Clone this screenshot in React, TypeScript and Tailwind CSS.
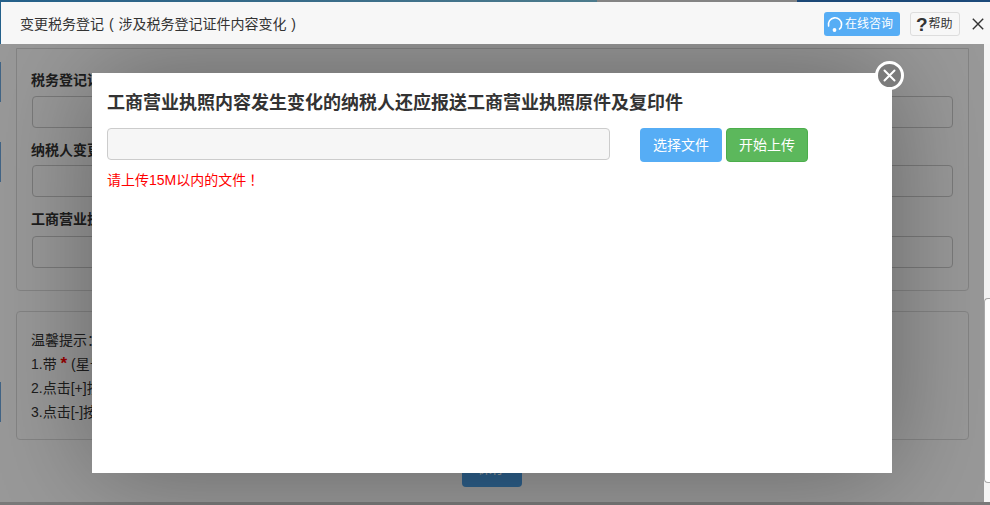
const font = { fontFamily: '"Liberation Sans", "Noto Sans CJK SC", sans-serif' };

const fields = [
  { label: '税务登记证', top: 'mt-[21px]', inputTop: 'mt-[6px]' },
  { label: '纳税人变更', top: 'mt-[12px]', inputTop: 'mt-[5px]' },
  { label: '工商营业执照', top: 'mt-[12px]', inputTop: 'mt-[7px]' },
];

function Headset() {
  return (
    <svg width="16" height="18" viewBox="0 0 16 18" fill="none" className="shrink-0">
      <path d="M1.6 11 A6.6 6.6 0 1 1 14.6 9.5 C14.6 11.5 14 13 12.5 14" stroke="white" strokeWidth="1.6" strokeLinecap="round" />
      <circle cx="7.5" cy="15" r="1.9" fill="white" />
    </svg>
  );
}

function PageBehind() {
  return (
    <div className="flex h-[458px] w-[983px] flex-col bg-white px-[15px]">
      <div className="mt-[4px] flex h-[243px] flex-col rounded-b border border-[#ddd] px-[15px] text-[14px] text-[#333]">
        {fields.map((f) => (
          <div key={f.label} className={f.top}>
            <div className="-ml-px h-[20px] leading-[20px] font-bold">{f.label}</div>
            <div className={`${f.inputTop} h-[32px] rounded border border-[#ccc] bg-white`} />
          </div>
        ))}
      </div>
      <div className="mt-[20px] h-[129px] rounded border border-[#ddd] px-[14px] pt-[16px] text-[14px] leading-[24px] text-[#333]">
        <p>温馨提示：</p>
        <p>
          1.带 <span className="text-[17px] leading-none font-bold text-[#f00]">*</span> (星号)的为必填项
        </p>
        <p>2.点击[+]按钮增加一行</p>
        <p>3.点击[-]按钮删除一行</p>
      </div>
      <div className="mt-[10px] flex justify-center pr-[2px]">
        <button className="h-[37px] w-[60px] rounded bg-[#4b9fe6] text-[14px] text-white">保存</button>
      </div>
    </div>
  );
}

function UploadModal() {
  return (
    <div className="absolute top-[73px] left-[92px] h-[400px] w-[800px] bg-white px-[15px] pt-[17px] shadow-[0_0_100px_rgba(0,0,0,0.34)]">
      <h2 className="h-[26px] text-[18px] leading-[26px] font-bold text-[#333]">
        工商营业执照内容发生变化的纳税人还应报送工商营业执照原件及复印件
      </h2>
      <div className="mt-[12px] flex items-start">
        <div className="h-[32px] w-[503px] rounded border border-[#ccc] bg-[#f6f6f6]" />
        <button className="ml-[30px] h-[34px] w-[82px] rounded bg-[#56adf5] text-[14px] text-white">选择文件</button>
        <button className="ml-[4px] h-[34px] w-[82px] rounded border border-[#4cae4c] bg-[#5cb85c] text-[14px] text-white">
          开始上传
        </button>
      </div>
      <p className="mt-[8px] text-[14px] leading-[20px] text-[#f00]">
        请上传15M以内的文件<span className="ml-[3px]">！</span>
      </p>
      <div className="absolute -top-[12px] -right-[12px] flex h-[29px] w-[29px] items-center justify-center rounded-full border-[3px] border-white bg-[#7b7b7b]">
        <svg width="13" height="13" viewBox="0 0 13 13" fill="none">
          <path d="M1.5 1.5 L11.5 11.5 M11.5 1.5 L1.5 11.5" stroke="white" strokeWidth="2" strokeLinecap="round" />
        </svg>
      </div>
    </div>
  );
}

export default function App() {
  return (
    <div className="relative flex h-[505px] w-[990px] flex-col overflow-hidden bg-white" style={font}>
      <div className="flex h-[2px] shrink-0">
        <div className="w-[597px] bg-gradient-to-r from-[#24608a] to-[#4f7f90]" />
        <div className="w-[200px] bg-[#888]" />
        <div className="flex-1 bg-[#1c4a7a]" />
      </div>
      <div className="relative z-20 flex h-[42px] shrink-0 items-center border-l border-[#24608a] bg-[#f7f7f7] pt-[2px] pl-[19px]">
        <span className="text-[14px] text-[#333] [word-spacing:1px]">变更税务登记 ( 涉及税务登记证件内容变化 )</span>
        <div className="ml-auto flex items-center">
          <button className="flex h-[24px] w-[76px] items-center gap-[2px] rounded-[3px] bg-[#56adf5] pl-[3px] text-[12px] text-white">
            <Headset />
            <span>在线咨询</span>
          </button>
          <button className="ml-[10px] flex h-[24px] w-[50px] items-center gap-px rounded-[3px] border border-[#ddd] bg-[#f7f7f7] pl-[5px] text-[12px] text-[#333]">
            <span className="text-[19px] leading-none font-bold">?</span>
            <span>帮助</span>
          </button>
          <svg width="12" height="12" viewBox="0 0 12 12" fill="none" className="mr-[6px] ml-[12px]">
            <path d="M0.8 0.8 L11.2 11.2 M11.2 0.8 L0.8 11.2" stroke="#333" strokeWidth="1.4" />
          </svg>
        </div>
      </div>
      <div className="flex flex-1">
        <div className="flex h-full w-px shrink-0 flex-col bg-white">
          <div className="mt-[18px] h-[40px] bg-[#6ea8e0]" />
          <div className="mt-[40px] h-[40px] bg-[#6ea8e0]" />
          <div className="mt-[200px] h-[40px] bg-[#6ea8e0]" />
        </div>
        <PageBehind />
      </div>
      <div className="absolute inset-x-0 top-[44px] bottom-0 z-10 bg-black/40" />
      <div className="absolute top-[44px] right-0 bottom-[3px] z-10 w-[6px] bg-[#f6f6f6] pt-[254px]">
        <div className="h-[185px] rounded-l-sm border border-r-0 border-[#aaa] bg-white" />
      </div>
      <div className="absolute inset-x-0 bottom-0 z-10 h-[3px] bg-[#7a7a7a]" />
      <div className="absolute inset-0 z-10">
        <UploadModal />
      </div>
    </div>
  );
}
